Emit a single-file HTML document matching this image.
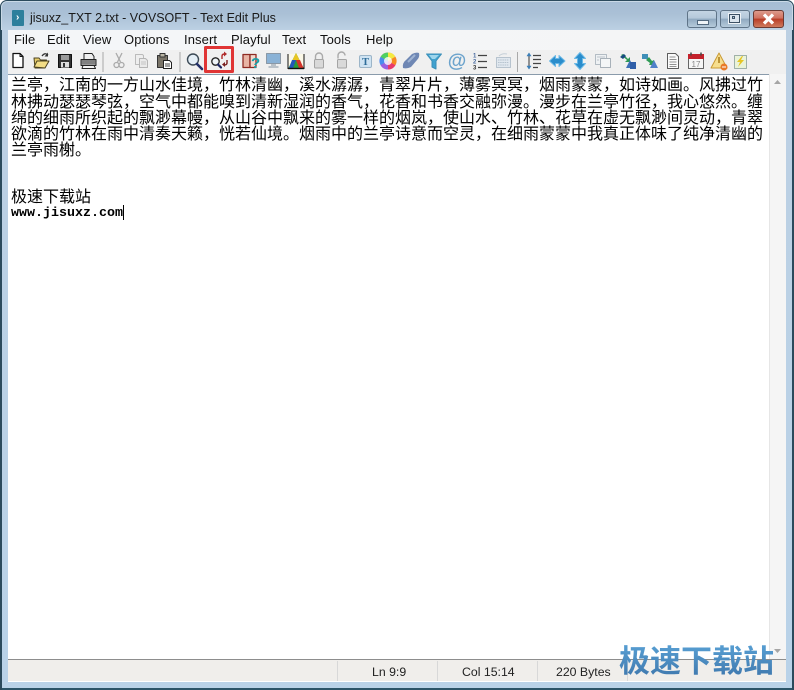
<!DOCTYPE html>
<html><head><meta charset="utf-8"><style>
html,body{margin:0;padding:0;width:794px;height:690px;overflow:hidden;background:#fff}
.a{position:absolute}
#frame{left:0;top:0;width:794px;height:690px;background:linear-gradient(180deg,#a5bcd3 0,#aac0d6 14px,#bcd0e3 30px,#b9d2e8 100%);box-shadow:inset 0 0 0 1px #2b4a5c,inset 0 0 0 2px #c9d9e6;border-radius:7px 7px 0 0;overflow:hidden}
#client{left:8px;top:30px;width:778px;height:652px;background:#f0f0f0}
.m{position:absolute;top:33px;font:13px/14px "Liberation Sans","DejaVu Sans",sans-serif;color:#111;letter-spacing:.1px}
#ed{left:8px;top:74px;width:761px;height:585px;background:#fff;border-top:1px solid #8a9bab;box-sizing:border-box}
.l{position:absolute;left:11px;font:16px/16px "WenQuanYi Zen Hei","Noto Sans CJK SC",sans-serif;color:#000;white-space:pre}
.st{position:absolute;top:665px;font:12.300px/14px "Liberation Sans",sans-serif;color:#222}
.b{position:absolute;top:10px;height:16px;border:1px solid #5f7488;border-radius:3px;box-sizing:content-box}
</style></head><body>
<div class="a" id="frame"></div>
<div class="a" style="left:12px;top:10px;width:12px;height:16px;background:#2d7f9c;border-radius:1px"></div>
<div class="a" style="left:16px;top:13px;width:5px;height:9px;color:#fff;font:bold 10px/9px 'Liberation Sans',sans-serif">›</div>
<div class="a" style="left:30px;top:11px;font:12.500px/15px 'Liberation Sans',sans-serif;color:#1a1a1a;white-space:pre">jisuxz_TXT 2.txt - VOVSOFT - Text Edit Plus</div>

<div class="b" style="left:687px;width:28px;background:linear-gradient(180deg,#c4d5e4 0,#b4c8da 45%,#90a9c0 50%,#b5cadb 100%)"></div>
<div class="a" style="left:697px;top:20px;width:10px;height:3px;background:#eef3f7;border:1px solid #52697f"></div>
<div class="b" style="left:720px;width:28px;background:linear-gradient(180deg,#c4d5e4 0,#b4c8da 45%,#90a9c0 50%,#b5cadb 100%)"></div>
<div class="a" style="left:729px;top:14px;width:9px;height:7px;border:1px solid #3d5266;outline:1px solid #eef3f7;background:#dbe5ee"></div>
<div class="a" style="left:732px;top:16px;width:3px;height:3px;background:#b9cbdb;border:1px solid #3d5266;box-sizing:border-box"></div>
<div class="b" style="left:753px;width:29px;background:linear-gradient(180deg,#dd9a8c 0,#d0715f 45%,#b93d27 50%,#cf7a5d 100%);border-color:#6b3a33"></div>
<svg class="a" style="left:753px;top:10px" width="31" height="18"><path d="M11 4.500l9 9M20 4.500l-9 9" stroke="#fff" stroke-width="3.200"/></svg>

<div class="a" id="client"></div>
<div class="a" style="left:8px;top:30px;width:778px;height:20px;background:linear-gradient(90deg,#f4f6f8,#f4f5f6)"></div>
<div class="m" style="left:14px">File</div><div class="m" style="left:47px">Edit</div><div class="m" style="left:83px">View</div><div class="m" style="left:124px">Options</div><div class="m" style="left:184px">Insert</div><div class="m" style="left:231px">Playful</div><div class="m" style="left:282px">Text</div><div class="m" style="left:320px">Tools</div><div class="m" style="left:366px">Help</div>

<svg class="a" style="left:0;top:46px" width="794" height="28" viewBox="0 46 794 28" stroke-linejoin="round">
<path d="M13 53.500h7l3 3v11H13z" fill="#fff" stroke="#111" stroke-width="1.300"/><path d="M20 53.500v3h3" fill="none" stroke="#111"/>
<path d="M34 58h5l1.500 2h6l-2 8H35z" fill="#e8cd6a" stroke="#4b4220"/><path d="M34 67l3-6h12l-4 7z" fill="#f3dd85" stroke="#4b4220"/><path d="M42 56q3-4 6-1" fill="none" stroke="#333" stroke-width="1.300"/><path d="M48 52.500v4h-3.500z" fill="#333"/>
<rect x="58.500" y="54.500" width="13" height="13" fill="#333" stroke="#111"/><rect x="61" y="55" width="8" height="5" fill="#9a9a9a"/><rect x="61" y="62" width="8" height="5.500" fill="#ddd"/><rect x="63" y="63" width="2" height="4" fill="#333"/>
<path d="M84 53.500h8l2 3v3H84z" fill="#eee" stroke="#222"/><path d="M81 59.500h15v6H81z" fill="#999" stroke="#222"/><path d="M83 65.500h11l1.500 3H82z" fill="#f4f4f4" stroke="#222"/><path d="M82 61h13M82 63h13" stroke="#555" stroke-width=".7"/>
<rect x="102.500" y="52" width="1" height="20" fill="#a9a9a9"/>
<path d="M116 53l4.500 9M122 53l-4.500 9" stroke="#aaa" stroke-width="1.300" fill="none"/><circle cx="116.500" cy="65" r="2.500" fill="none" stroke="#aaa" stroke-width="1.300"/><circle cx="121.500" cy="65" r="2.500" fill="none" stroke="#aaa" stroke-width="1.300"/>
<path d="M135.500 54.500h7l1 1v9h-8z" fill="#eee" stroke="#bbb"/><path d="M139.500 58.500h6l2 2v7h-8z" fill="#eaeaea" stroke="#b5b5b5"/><path d="M141 62h5M141 64h5" stroke="#c4c4c4"/>
<path d="M157.500 55.500h10v12h-10z" fill="#7a7468" stroke="#333"/><rect x="160" y="53.500" width="5" height="3.500" fill="#b9b4a4" stroke="#333"/><path d="M163.500 60.500h6l2 2v6h-8z" fill="#fff" stroke="#222"/><path d="M165 64h5M165 66h5" stroke="#444"/>
<rect x="179.500" y="52" width="1" height="20" fill="#a9a9a9"/>
<circle cx="193" cy="59.500" r="5.500" fill="#e4eef6" stroke="#3c4a56" stroke-width="1.400"/><path d="M197 64l5 5" stroke="#23306a" stroke-width="2.600" stroke-linecap="round"/>
<rect x="205.500" y="47.500" width="27" height="24" fill="none" stroke="#e03535" stroke-width="3"/>
<circle cx="215.500" cy="61.500" r="3.700" fill="#eef3f7" stroke="#222" stroke-width="1.300"/><path d="M218 64.500l3 3" stroke="#1c2560" stroke-width="2.200" stroke-linecap="round"/>
<path d="M222 59v-3q0-2 3-2" fill="none" stroke="#b02a2a" stroke-width="1.400"/><path d="M224 51.500l3 2.500-3 2.500z" fill="#b02a2a"/><path d="M227 60v3q0 2-3 2" fill="none" stroke="#7a1f1f" stroke-width="1.400"/><path d="M225 62l-3 2.500 3 2.500z" fill="#7a1f1f"/>
<path d="M243 54.500h7v13h-7z" fill="#e8b4a4" stroke="#8e2a22" stroke-width="1.300"/><path d="M250 54.500h6v13h-6z" fill="#f2d8cc" stroke="#8e2a22" stroke-width="1.300"/><text x="251" y="68" font-family="Liberation Sans" font-weight="bold" font-size="15" fill="#16a0a8">?</text>
<rect x="266.500" y="53.500" width="14" height="10" fill="#8ab2d6" stroke="#8a98a6"/><path d="M271 64h5v2h2.500v2h-10v-2H271z" fill="#b9c1c8"/>
<rect x="288" y="54" width="16" height="15" fill="#fbf8e8"/><path d="M296 53l7.500 15H288.500z" fill="#2b9a3a"/><path d="M296 53l3.500 7h-7z" fill="#e9c521"/><path d="M292 60h4l-3 8h-4z" fill="#2456b8"/><path d="M296 60h4l3.500 8H299z" fill="#d4322a"/><path d="M288 54v15M304 54v15" stroke="#111"/><path d="M288 68.500h16" stroke="#111" stroke-width="1.400"/>
<path d="M315.500 59v-2.500a3.500 3.500 0 0 1 7 0V59" fill="none" stroke="#aaa" stroke-width="1.400"/><rect x="314.500" y="59.500" width="9" height="8.500" rx="1" fill="#d9d9d9" stroke="#a4a4a4"/>
<path d="M338 59v-3a3.500 3.500 0 0 1 7 0v0" fill="none" stroke="#aaa" stroke-width="1.400" transform="translate(0 -.5)"/><rect x="337.500" y="59.500" width="9" height="8.500" rx="1" fill="#d9d9d9" stroke="#a4a4a4"/>
<rect x="359.500" y="55.500" width="12" height="12" rx="1.500" fill="#cfe3f2" stroke="#9cb5c8"/><text x="365.500" y="65" text-anchor="middle" font-family="Liberation Serif" font-weight="bold" font-size="10.500" fill="#2f6d9a">T</text>
<circle cx="388" cy="61" r="8.500" fill="#f060c0"/><path d="M388 61V52.500a8.500 8.500 0 0 1 7.400 4.200z" fill="#f4ea40"/><path d="M388 61l7.400-4.200a8.500 8.500 0 0 1 0 8.500z" fill="#f68a20"/><path d="M388 61l7.400 4.200a8.500 8.500 0 0 1-7.400 4.300z" fill="#e83a6a"/><path d="M388 61v8.500a8.500 8.500 0 0 1-7.400-4.300z" fill="#9a60e0"/><path d="M388 61l-7.400 4.200a8.500 8.500 0 0 1 0-8.500z" fill="#4a8cee"/><path d="M388 61l-7.400-4.200a8.500 8.500 0 0 1 7.400-4.300z" fill="#50d060"/><circle cx="388" cy="61" r="4" fill="#fff" fill-opacity=".8"/>
<path d="M403 68q-1-5 3-8l6-6q4-2 7-1 1 4-2 7l-6 7q-4 2-8 1z" fill="#6f87b4"/><path d="M408 62l7-7" stroke="#9fb3d3" stroke-width="2"/>
<path d="M426.500 54h15l-5.500 7v8l-4-2v-6z" fill="#41a2cf" stroke="#3b8fb8"/><path d="M429 55h10l-4 4h-3z" fill="#9ed5ec"/>
<text x="457" y="67" text-anchor="middle" font-family="Liberation Sans" font-weight="bold" font-size="19" fill="#6ca3cc">@</text>
<text x="473" y="57.500" font-family="Liberation Sans" font-size="6" font-weight="bold" fill="#4a6ca0">1</text><text x="473" y="63.500" font-family="Liberation Sans" font-size="6" font-weight="bold" fill="#4a6ca0">2</text><text x="473" y="69.500" font-family="Liberation Sans" font-size="6" font-weight="bold" fill="#333">3</text><path d="M478 55.500h9M478 61.500h9M478 67.500h9" stroke="#444" stroke-width="1.300"/>
<path d="M496.500 57.500h14v10h-14z" fill="#e1e8ef" stroke="#b7c3ce"/><path d="M498 60h11M498 62.500h11M498 65h11" stroke="#b5c2ce" stroke-dasharray="1.500 .7"/><path d="M499 56q3-3 8-2" stroke="#c5cfd8" fill="none"/>
<rect x="517" y="52" width="1" height="20" fill="#a9a9a9"/>
<path d="M529 53.500v15" stroke="#333"/><path d="M527 56l2-3 2 3zM527 66l2 3 2-3z" fill="#3c7fb8" stroke="#3c7fb8" stroke-width=".6"/><path d="M533 55.500h8M533 59.500h8M533 63.500h8M533 67.500h5" stroke="#444" stroke-width="1.200"/>
<path d="M549.500 61l6-5.500v3h3.500v-3l6 5.500-6 5.500v-3h-3.500v3z" fill="#2a8dcc" stroke="#6bb9e6"/>
<path d="M580 52.500l5.500 6h-3v5h3l-5.500 6-5.500-6h3v-5h-3z" fill="#2a8dcc" stroke="#6bb9e6"/>
<path d="M595.500 54.500h11v10h-11z" fill="#eef1f3" stroke="#b3bcc4"/><path d="M600.500 58.500h10v9h-10z" fill="#f4f6f7" stroke="#a8b1b9"/><path d="M597 57h8M597 60h2" stroke="#bcc4cb"/>
<path d="M621 55l2-1 5 5 2-2v5h-5l2-2z" fill="#2f9a55"/><path d="M626 68l4-8 4 8z" fill="#3f70b8"/><rect x="630" y="62" width="6" height="7" fill="#2f5ea8"/><path d="M620 57l4-3 2 2-3 3z" fill="#174c7e"/>
<path d="M642 54h6v5h-6z" fill="#3f8fb8"/><path d="M646 60l3-3 3 4 2-1v5h-5l1-2z" fill="#2f9a55"/><path d="M650 68l4-8 4 8z" fill="#4f80c8"/>
<path d="M667.500 53.500h8l3 3v12h-11z" fill="#fafafa" stroke="#5c5c5c"/><path d="M669.500 57h6M669.500 59.500h7M669.500 62h7M669.500 64.500h7M669.500 66.500h7" stroke="#707070" stroke-width=".8"/>
<rect x="688.500" y="55.500" width="15" height="13" fill="#f6f6f6" stroke="#666"/><rect x="688" y="54" width="16" height="5" fill="#c3202a"/><path d="M691 52.500v3M701 52.500v3" stroke="#444" stroke-width="1.500"/><text x="696" y="67" text-anchor="middle" font-family="Liberation Sans" font-size="8" fill="#888">17</text>
<path d="M719 53l8 15h-16z" fill="#f6de8e" stroke="#c99a34"/><path d="M719 57v6" stroke="#a67a1a" stroke-width="1.500"/><circle cx="724" cy="67" r="3.500" fill="#e87a28"/><path d="M722 67h4" stroke="#fff"/>
<path d="M734.500 55.500h12v13h-12z" fill="#eaf3d8" stroke="#9fb0a8"/><path d="M742 56l-5 6h3l-2 5 6-7h-3l2-4z" fill="#e6c523"/>
</svg>

<div class="a" id="ed"></div>
<div class="a" style="left:769px;top:74px;width:17px;height:585px;background:#f5f5f5;border-left:1px solid #e6e6e6;box-sizing:border-box"></div>
<svg class="a" style="left:769px;top:74px" width="17" height="585"><path d="M5 10l3.500-4 3.500 4z" fill="#a5a5a5"/><path d="M5 575l3.500 4 3.500-4z" fill="#a5a5a5"/></svg>

<div class="l" style="top:75px">兰亭，江南的一方山水佳境，竹林清幽，溪水潺潺，青翠片片，薄雾冥冥，烟雨蒙蒙，如诗如画。风拂过竹</div>
<div class="l" style="top:92px">林拂动瑟瑟琴弦，空气中都能嗅到清新湿润的香气，花香和书香交融弥漫。漫步在兰亭竹径，我心悠然。缠</div>
<div class="l" style="top:108px">绵的细雨所织起的飘渺幕幔，从山谷中飘来的雾一样的烟岚，使山水、竹林、花草在虚无飘渺间灵动，青翠</div>
<div class="l" style="top:124px">欲滴的竹林在雨中清奏天籁，恍若仙境。烟雨中的兰亭诗意而空灵，在细雨蒙蒙中我真正体味了纯净清幽的</div>
<div class="l" style="top:140px">兰亭雨榭。</div>
<div class="l" style="top:187px">极速下载站</div>
<div class="a" style="left:11px;top:206px;font:bold 13.330px/16px 'Liberation Mono',monospace;color:#000;white-space:pre">www.jisuxz.com</div>
<div class="a" style="left:123px;top:205px;width:1px;height:15px;background:#000"></div>

<div class="a" style="left:8px;top:659px;width:778px;height:1px;background:#8d8d8d"></div>
<div class="a" style="left:8px;top:660px;width:778px;height:22px;background:#f0eeeb"></div>
<div class="a" style="left:337px;top:661px;width:1px;height:20px;background:#d8d8d8"></div>
<div class="a" style="left:437px;top:661px;width:1px;height:20px;background:#d8d8d8"></div>
<div class="a" style="left:537px;top:661px;width:1px;height:20px;background:#d8d8d8"></div>
<div class="a" style="left:627px;top:661px;width:1px;height:20px;background:#d8d8d8"></div>
<div class="st" style="left:372px">Ln 9:9</div><div class="st" style="left:462px">Col 15:14</div><div class="st" style="left:556px">220 Bytes</div>
<div class="a" style="left:8px;top:681px;width:778px;height:1px;background:#fff"></div>
<div class="a" style="left:0;top:688px;width:794px;height:2px;background:#2b5468"></div>
<div class="a" style="left:0;top:30px;width:2px;height:660px;background:#2b4a5c"></div>
<div class="a" style="left:792px;top:30px;width:2px;height:660px;background:#2b4a5c"></div>

<div class="a" style="left:619px;top:640px;font:bold 31px/38px 'Noto Sans CJK SC','WenQuanYi Zen Hei',sans-serif;white-space:pre;background:linear-gradient(180deg,#5ba4d8,#3f78ad);-webkit-background-clip:text;background-clip:text;color:transparent">极速下载站</div>
</body></html>
